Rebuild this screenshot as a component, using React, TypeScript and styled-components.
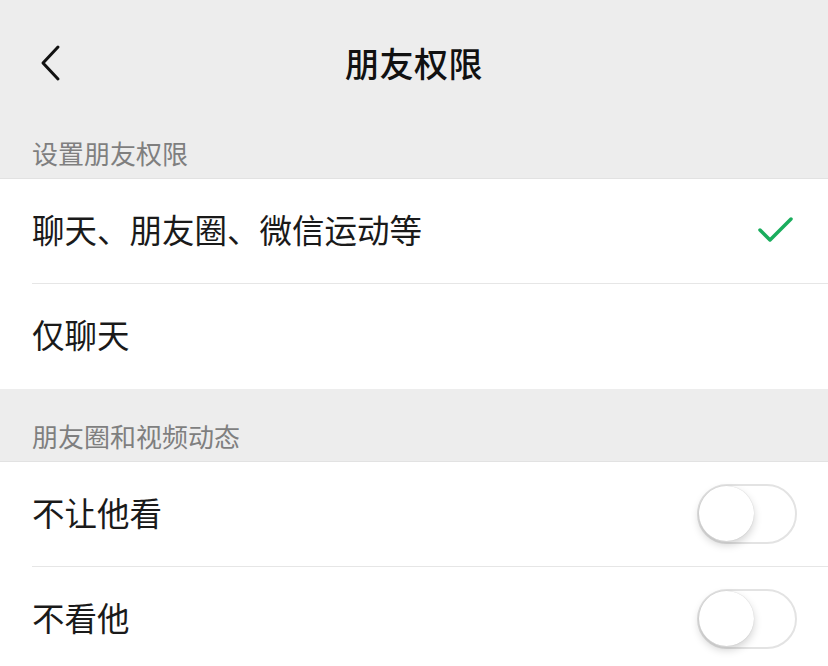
import styled, { createGlobalStyle } from 'styled-components';

const GlobalStyle = createGlobalStyle`
  html, body {
    margin: 0;
    padding: 0;
    background: #ededed;
    font-family: 'Noto Sans CJK SC', 'Noto Sans', sans-serif;
  }
`;

const Page = styled.div`
  width: 828px;
  height: 666px;
  overflow: hidden;
  background: #ededed;
`;

const NavBar = styled.div`
  position: relative;
  height: 128px;
  display: flex;
  align-items: center;
  justify-content: center;
`;

const BackButton = styled.div`
  position: absolute;
  left: 38px;
  top: 44px;
  width: 26px;
  height: 38px;
`;

const Title = styled.h1`
  margin: 0 0 3px;
  font-size: 34px;
  font-weight: 500;
  color: #111;
  letter-spacing: 0.5px;
`;

const SectionHeader = styled.div<{ top: number }>`
  padding: ${(p) => p.top}px 32px 10px;
  font-size: 26px;
  line-height: 30px;
  color: #7f7f7f;
  border-bottom: 1px solid #e2e2e2;
`;

const Group = styled.div`
  background: #fff;
`;

const Row = styled.div<{ last?: boolean }>`
  height: 104px;
  margin-left: 32px;
  padding-right: 32px;
  display: flex;
  align-items: center;
  justify-content: space-between;
  border-bottom: 1px solid ${(p) => (p.last ? 'transparent' : '#e6e6e6')};
`;

const Label = styled.span`
  font-size: 32.5px;
  line-height: 40px;
  padding-bottom: 5px;
  color: #1a1a1a;
`;

const Switch = styled.div`
  position: relative;
  width: 96px;
  height: 56px;
  margin-right: -1px;
  border: 2px solid #e3e3e3;
  border-radius: 30px;
  background: #fff;
`;

const Knob = styled.div`
  position: absolute;
  left: 0;
  top: 0;
  width: 55px;
  height: 55px;
  border-radius: 50%;
  background: #fff;
  box-shadow: 0 4px 8px rgba(0, 0, 0, 0.18), 0 0 1px rgba(0, 0, 0, 0.2);
`;

function Chevron() {
  return (
    <svg width="26" height="38" viewBox="0 0 26 38">
      <polyline
        points="20,3 5,19 20,35"
        fill="none"
        stroke="#111"
        strokeWidth="3"
        strokeLinecap="round"
        strokeLinejoin="round"
      />
    </svg>
  );
}

function Check() {
  return (
    <svg width="40" height="30" viewBox="0 0 40 30">
      <polyline
        points="4,14 14,24 35,3"
        fill="none"
        stroke="#1aad5d"
        strokeWidth="3.5"
        strokeLinecap="round"
        strokeLinejoin="round"
      />
    </svg>
  );
}

function Toggle() {
  return (
    <Switch>
      <Knob />
    </Switch>
  );
}

export default function App() {
  return (
    <Page>
      <GlobalStyle />
      <NavBar>
        <BackButton>
          <Chevron />
        </BackButton>
        <Title>朋友权限</Title>
      </NavBar>
      <SectionHeader top={10}>设置朋友权限</SectionHeader>
      <Group>
        <Row>
          <Label>聊天、朋友圈、微信运动等</Label>
          <Check />
        </Row>
        <Row last>
          <Label>仅聊天</Label>
        </Row>
      </Group>
      <SectionHeader top={32}>朋友圈和视频动态</SectionHeader>
      <Group>
        <Row>
          <Label>不让他看</Label>
          <Toggle />
        </Row>
        <Row last>
          <Label>不看他</Label>
          <Toggle />
        </Row>
      </Group>
    </Page>
  );
}
